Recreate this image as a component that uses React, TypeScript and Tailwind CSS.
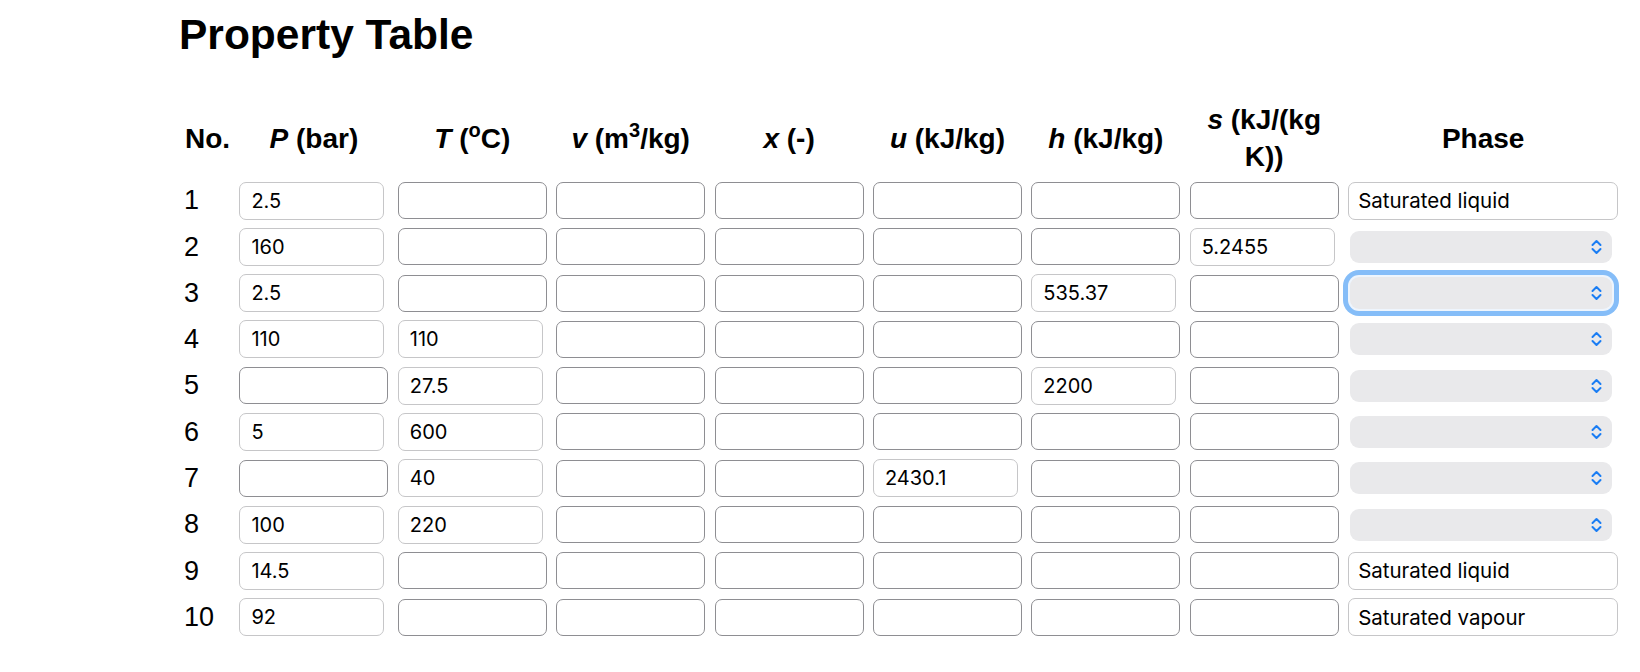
import React from "react";

type Row = {
  no: number;
  values: (string | null)[];
  phase: string | null;
  focused?: boolean;
};

const rows: Row[] = [
  { no: 1, values: ["2.5", null, null, null, null, null, null], phase: "Saturated liquid" },
  { no: 2, values: ["160", null, null, null, null, null, "5.2455"], phase: null },
  { no: 3, values: ["2.5", null, null, null, null, "535.37", null], phase: null, focused: true },
  { no: 4, values: ["110", "110", null, null, null, null, null], phase: null },
  { no: 5, values: [null, "27.5", null, null, null, "2200", null], phase: null },
  { no: 6, values: ["5", "600", null, null, null, null, null], phase: null },
  { no: 7, values: [null, "40", null, null, "2430.1", null, null], phase: null },
  { no: 8, values: ["100", "220", null, null, null, null, null], phase: null },
  { no: 9, values: ["14.5", null, null, null, null, null, null], phase: "Saturated liquid" },
  { no: 10, values: ["92", null, null, null, null, null, null], phase: "Saturated vapour" },
];

const cols = "grid grid-cols-[48px_repeat(7,149px)_270px] gap-x-[9.4px]";

function Head({ sym, unit }: { sym: string; unit: React.ReactNode }) {
  return (
    <div className="self-center text-center">
      <i>{sym}</i> {unit}
    </div>
  );
}

function Field({ value }: { value: string | null }) {
  if (value === null) {
    return (
      <input
        readOnly
        value=""
        className="h-[37px] w-[149px] rounded-[7px] border-[1.8px] border-[#8e8e92] bg-white px-3 outline-none"
      />
    );
  }
  return (
    <input
      readOnly
      value={value}
      className="h-[38px] w-[145px] rounded-[7px] border-[1.5px] border-[#c6c6c8] bg-white px-[11px] text-black outline-none"
    />
  );
}

function Chevrons() {
  return (
    <svg width="13" height="18" viewBox="0 0 13 18" fill="none" stroke="#1a7df4" strokeWidth="2" strokeLinecap="round" strokeLinejoin="round">
      <path d="M2.5 7 L6.5 3 L10.5 7" />
      <path d="M2.5 11 L6.5 15 L10.5 11" />
    </svg>
  );
}

function PhaseSelect({ focused }: { focused?: boolean }) {
  return (
    <div
      className={
        focused
          ? "ml-[2px] flex h-[32px] w-[262px] items-center justify-end rounded-[9px] bg-[#e9e9eb] pr-[9px] ring-[5px] ring-[#85bdf8] ring-offset-[2px] ring-offset-[#eef5fd]"
          : "ml-[2px] flex h-[32px] w-[262px] items-center justify-end rounded-[9px] bg-[#e9e9eb] pr-[9px]"
      }
    >
      <Chevrons />
    </div>
  );
}

export default function App() {
  return (
    <div className="min-h-screen bg-white pt-[11px] text-black [font-family:'Liberation_Sans',Arial,sans-serif]">
      <h1 className="pl-[179px] text-[42.5px] leading-[48px] font-bold">Property Table</h1>

      <div className="mt-[42px] pl-[182px]">
        <div className={`${cols} mb-[6.5px] text-[28px] leading-[37px] font-bold`}>
          <div className="self-center pl-[3px]">No.</div>
          <Head sym="P" unit="(bar)" />
          <Head
            sym="T"
            unit={
              <>
                (<sup className="top-[-0.55em] text-[20px]">o</sup>C)
              </>
            }
          />
          <Head
            sym="v"
            unit={
              <>
                (m<sup className="top-[-0.55em] text-[20px]">3</sup>/kg)
              </>
            }
          />
          <Head sym="x" unit="(-)" />
          <Head sym="u" unit="(kJ/kg)" />
          <Head sym="h" unit="(kJ/kg)" />
          <Head sym="s" unit="(kJ/(kg K))" />
          <div className="self-center text-center">Phase</div>
        </div>

        <div className={`${cols} gap-y-[8.3px]`}>
          {rows.map((r) => (
            <React.Fragment key={r.no}>
              <div className="flex h-[38px] items-center pl-[2px] text-[27px]">{r.no}</div>
              {r.values.map((v, i) => (
                <div key={i} className="flex h-[38px] items-center text-[20px] [font-family:Inter,'Noto_Sans',sans-serif]">
                  <Field value={v} />
                </div>
              ))}
              <div className="flex h-[38px] items-center text-[20.5px] [font-family:Inter,'Noto_Sans',sans-serif]">
                {r.phase ? (
                  <input
                    readOnly
                    value={r.phase}
                    className="h-[38px] w-[270px] rounded-[7px] border-[1.5px] border-[#c6c6c8] bg-white px-[9px] text-black outline-none"
                  />
                ) : (
                  <PhaseSelect focused={r.focused} />
                )}
              </div>
            </React.Fragment>
          ))}
        </div>
      </div>
    </div>
  );
}
